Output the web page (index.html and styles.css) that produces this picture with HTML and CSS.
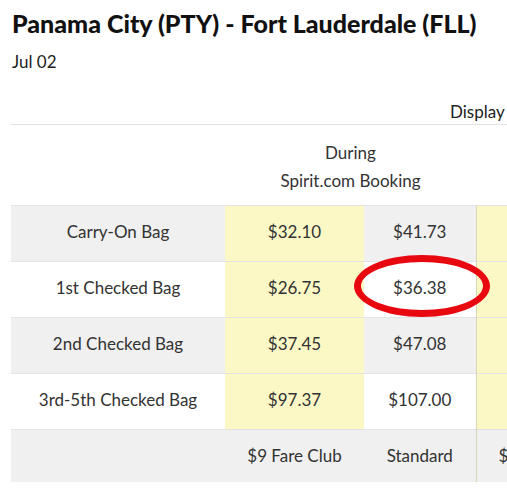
FILE: index.html
```html
<!DOCTYPE html>
<html>
<head>
<meta charset="utf-8">
<link rel="stylesheet" href="styles.css">
</head>
<body>
<div class="page">
  <h1 class="title">Panama City (PTY) - Fort Lauderdale (FLL)</h1>
  <div class="date">Jul 02</div>
  <div class="display-row"><span class="display">Display prices in USD</span></div>
  <div class="table-wrap">
    <table class="fees">
      <colgroup>
        <col class="c-label"><col class="c-club"><col class="c-std"><col class="c-club"><col class="c-std">
      </colgroup>
      <thead>
        <tr class="head">
          <th></th>
          <th colspan="2">During<br>Spirit.com Booking</th>
          <th colspan="2">Online<br>Check-In</th>
        </tr>
      </thead>
      <tbody>
        <tr class="odd"><td>Carry-On Bag</td><td class="club">$32.10</td><td>$41.73</td><td class="club sep">$37.45</td><td>$47.08</td></tr>
        <tr class="even"><td>1st Checked Bag</td><td class="club">$26.75</td><td class="circled">$36.38<span class="ring"></span></td><td class="club sep">$32.10</td><td>$41.73</td></tr>
        <tr class="odd"><td>2nd Checked Bag</td><td class="club">$37.45</td><td>$47.08</td><td class="club sep">$42.80</td><td>$52.43</td></tr>
        <tr class="even"><td>3rd-5th Checked Bag</td><td class="club">$97.37</td><td>$107.00</td><td class="club sep">$97.37</td><td>$107.00</td></tr>
        <tr class="foot"><td></td><td>$9 Fare Club</td><td>Standard</td><td class="sep">$9 Fare Club</td><td>Standard</td></tr>
      </tbody>
    </table>
  </div>
</div>
</body>
</html>
```
FILE: styles.css
```css
html, body {
  margin: 0;
  padding: 0;
  background: #fff;
  overflow: hidden;
}
.page {
  width: 507px;
  overflow: hidden;
  font-family: Lato, "Liberation Sans", sans-serif;
  color: #333;
}
.title {
  margin: 0;
  padding: 8px 0 0 12px;
  font-size: 25px;
  line-height: 30px;
  font-weight: 900;
  color: #111;
  white-space: nowrap;
}
.date {
  padding: 13px 0 0 12px;
  font-size: 17px;
  line-height: 22px;
  color: #222;
}
.display-row {
  margin: 0 0 0 10px;
  width: 800px;
  padding: 28px 0 0 440px;
  box-sizing: border-box;
  height: 52px;
  border-bottom: 1px solid #e2e2e2;
  font-size: 17px;
  line-height: 22px;
  color: #222;
  white-space: nowrap;
}
.table-wrap {
  padding-left: 11px;
}
.fees {
  border-collapse: collapse;
  table-layout: fixed;
  width: 716px;
  font-size: 17px;
}
.c-label { width: 214px; }
.c-club { width: 139px; }
.c-std { width: 112px; }
.fees th {
  font-weight: 400;
  height: 66px;
  padding: 14px 0 0;
  vertical-align: top;
  line-height: 28px;
  color: #333;
}
.fees td {
  height: 51px;
  padding: 0 0 4px;
  text-align: center;
  vertical-align: middle;
  border-top: 1px solid #e4e4e4;
  white-space: nowrap;
}
.odd td { background: #f0f0f0; }
.even td { background: #fff; }
.fees td.club { background: #fcf8c6; }
.fees td.sep { border-left: 1px solid #d9d6b8; }
.foot td {
  background: #f0f0f0;
  height: 50px;
  padding: 0 0 2px;
}
.circled {
  position: relative;
}
.ring {
  position: absolute;
  left: -10px;
  top: -7px;
  width: 122px;
  height: 48px;
  border: 7px solid #e8080f;
  border-radius: 50%;
}
```
